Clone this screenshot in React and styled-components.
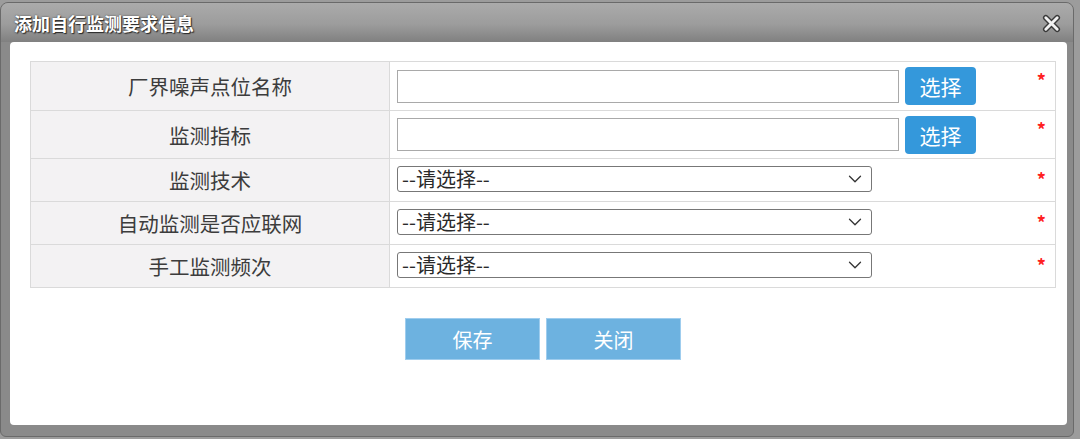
import React from "react";
import styled, { createGlobalStyle } from "styled-components";
import { ChevronDown } from "lucide-react";

const GlobalStyle = createGlobalStyle`
  html, body {
    margin: 0;
    padding: 0;
    background: #9a9a9a;
    font-family: "Microsoft YaHei", "Noto Sans CJK SC", "Noto Sans", sans-serif;
  }
`;

const Backdrop = styled.div`
  width: 1080px;
  height: 439px;
  background: #9c9c9c;
  overflow: hidden;
  padding-top: 2px;
  box-sizing: border-box;
`;

const Dialog = styled.div`
  width: 1074px;
  height: 435px;
  box-sizing: border-box;
  border-radius: 8px 8px 6px 6px;
  background: #8a8a8a;
  border: 1px solid #6a6a6a;
  padding: 0 6px 11px 9px;
  display: flex;
  flex-direction: column;
`;

const TitleBar = styled.div`
  height: 39px;
  display: flex;
  align-items: center;
  justify-content: space-between;
  margin: 0 -6px 0 -9px;
  padding: 0 12px 0 13px;
  border-radius: 7px 7px 0 0;
  background: linear-gradient(#ababab, #9c9c9c 55%, #808080);
`;

const Title = styled.h1`
  margin: 0;
  font-size: 18px;
  font-weight: bold;
  color: #fff;
  text-shadow: 1px 1px 1px #2a2a2a, 0 0 2px #444;
`;

const CloseIcon = styled.svg`
  width: 19px;
  height: 19px;
  display: block;
  margin-top: 1px;
`;

const Content = styled.div`
  flex: 1;
  background: #fff;
  border-radius: 4px;
  padding: 19px 11px 0 20px;
`;

const FormTable = styled.table`
  width: 100%;
  border-collapse: collapse;
  border: 1px solid #dadada;
`;

const Row = styled.tr`
  height: ${(p) => p.$h}px;
`;

const Label = styled.td`
  width: 358px;
  background: #f3f2f3;
  border: 1px solid #dadada;
  text-align: center;
  font-size: 20.5px;
  color: #3c3c3c;
  padding: 0;
`;

const Field = styled.td`
  border: 1px solid #dadada;
  padding: 0 9px 0 7px;
`;

const FieldInner = styled.div`
  display: flex;
  align-items: center;
`;

const TextInput = styled.input`
  width: 502px;
  height: 33px;
  box-sizing: border-box;
  border: 1px solid #a9a9a9;
  padding: 0 6px;
  font-size: 16px;
  outline: none;
`;

const PickButton = styled.button`
  width: 71px;
  height: 38px;
  margin-left: 6px;
  border: none;
  border-radius: 4px;
  background: #3498db;
  color: #fff;
  font-family: inherit;
  font-size: 21px;
  padding: 0;
`;

const SelectWrap = styled.div`
  position: relative;
  width: 475px;
  height: 26px;
  margin-bottom: 3px;
`;

const Select = styled.select`
  width: 100%;
  height: 100%;
  appearance: none;
  box-sizing: border-box;
  border: 1px solid #777;
  border-radius: 3px;
  background: #fff;
  padding: 0 0 0 4px;
  font-family: inherit;
  font-size: 20px;
  line-height: 1;
  color: #2a2a2a;
  outline: none;
`;

const Arrow = styled(ChevronDown)`
  position: absolute;
  right: 6px;
  top: 2px;
  pointer-events: none;
`;

const Required = styled.span`
  margin-left: auto;
  color: #ff2020;
  font-size: 18px;
  font-weight: bold;
  line-height: 1;
  margin-top: ${(p) => p.$lift}px;
`;

const Actions = styled.div`
  display: flex;
  justify-content: center;
  gap: 6px;
  margin-top: 30px;
`;

const ActionButton = styled.button`
  width: 135px;
  height: 42px;
  border: 1px solid #9fcdee;
  background: #6db2e0;
  color: #fff;
  font-family: inherit;
  font-size: 20px;
  padding: 0;
`;

const pickRows = [
  { label: "厂界噪声点位名称", h: 49 },
  { label: "监测指标", h: 48 },
];

const selectRows = ["监测技术", "自动监测是否应联网", "手工监测频次"];

export default function App() {
  return (
    <>
      <GlobalStyle />
      <Backdrop>
        <Dialog>
          <TitleBar>
            <Title>添加自行监测要求信息</Title>
            <CloseIcon viewBox="0 0 20 20">
              <path d="M4 4 L16 16 M16 4 L4 16" stroke="#3a3a3a" strokeWidth="6" strokeLinecap="round" />
              <path d="M4 4 L16 16 M16 4 L4 16" stroke="#f2f2f2" strokeWidth="3" strokeLinecap="round" />
            </CloseIcon>
          </TitleBar>
          <Content>
            <FormTable>
              <tbody>
                {pickRows.map((r) => (
                  <Row key={r.label} $h={r.h}>
                    <Label>{r.label}</Label>
                    <Field>
                      <FieldInner>
                        <TextInput />
                        <PickButton>选择</PickButton>
                        <Required $lift={-12}>*</Required>
                      </FieldInner>
                    </Field>
                  </Row>
                ))}
                {selectRows.map((label) => (
                  <Row key={label} $h={43}>
                    <Label>{label}</Label>
                    <Field>
                      <FieldInner>
                        <SelectWrap>
                          <Select defaultValue="">
                            <option value="">--请选择--</option>
                          </Select>
                          <Arrow size={22} color="#333" strokeWidth={1.4} />
                        </SelectWrap>
                        <Required $lift={-2}>*</Required>
                      </FieldInner>
                    </Field>
                  </Row>
                ))}
              </tbody>
            </FormTable>
            <Actions>
              <ActionButton>保存</ActionButton>
              <ActionButton>关闭</ActionButton>
            </Actions>
          </Content>
        </Dialog>
      </Backdrop>
    </>
  );
}
